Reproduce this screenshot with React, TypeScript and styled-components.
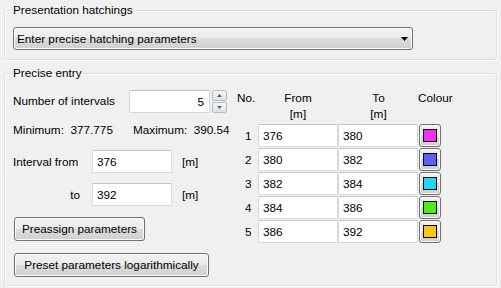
import styled, { createGlobalStyle } from 'styled-components';

const rows = [
  { no: 1, from: '376', to: '380', colour: '#f133f1' },
  { no: 2, from: '380', to: '382', colour: '#5f5ff7' },
  { no: 3, from: '382', to: '384', colour: '#22d9f7' },
  { no: 4, from: '384', to: '386', colour: '#4cf014' },
  { no: 5, from: '386', to: '392', colour: '#f5c816' },
];

const GlobalStyle = createGlobalStyle`
  html, body {
    margin: 0;
    padding: 0;
    background: #f0f0f0;
  }
  body {
    font-family: "Liberation Sans", Arial, sans-serif;
    font-size: 11.75px;
    color: #000;
  }
`;

const App = (): JSX.Element => (
  <>
    <GlobalStyle />
    <Window>
      <GroupBox $pad="10px 8px 9px">
        <Legend>Presentation hatchings</Legend>
        <Dropdown>
          <span>Enter precise hatching parameters</span>
          <svg width="7" height="4" viewBox="0 0 7 4">
            <path d="M0 0h7L3.5 4z" fill="#000" />
          </svg>
        </Dropdown>
      </GroupBox>

      <GroupBox $pad="9px 8px 0" $grow>
        <Legend>Precise entry</Legend>
        <Columns>
          <LeftColumn>
            <Row $height={24}>
              <Label $width={116}>Number of intervals</Label>
              <TextBox $width={81} $align="right" defaultValue="5" />
              <Spinner>
                <SpinButton>
                  <svg width="5" height="3" viewBox="0 0 5 3"><path d="M0 3h5L2.5 0z" fill="#4d6283" /></svg>
                </SpinButton>
                <SpinButton>
                  <svg width="5" height="3" viewBox="0 0 5 3"><path d="M0 0h5L2.5 3z" fill="#4d6283" /></svg>
                </SpinButton>
              </Spinner>
            </Row>

            <Row $height={14} $top={10}>
              <Label $width={120}>Minimum:&nbsp; 377.775</Label>
              <Label>Maximum:&nbsp; 390.54</Label>
            </Row>

            <Row $height={23} $top={13}>
              <Label $width={79}>Interval from</Label>
              <TextBox $width={80} defaultValue="376" />
              <Unit>[m]</Unit>
            </Row>

            <Row $height={23} $top={10}>
              <Label $width={79} $right>to</Label>
              <TextBox $width={80} defaultValue="392" />
              <Unit>[m]</Unit>
            </Row>

            <Row $height={24} $top={11}>
              <PushButton $width={131}>Preassign parameters</PushButton>
            </Row>

            <Row $height={24} $top={12}>
              <PushButton $width={195}>Preset parameters logarithmically</PushButton>
            </Row>
          </LeftColumn>

          <Table>
            <HeaderRow>
              <HeadCell>No.</HeadCell>
              <HeadCell $center>From<br />[m]</HeadCell>
              <HeadCell $center>To<br />[m]</HeadCell>
              <HeadCell $shift>Colour</HeadCell>
            </HeaderRow>
            <Body>
              {rows.map(r => (
                <TableRow key={r.no}>
                  <NoCell>{r.no}</NoCell>
                  <TextBox $width={80} defaultValue={r.from} />
                  <TextBox $width={80} defaultValue={r.to} />
                  <ColourButton>
                    <Swatch style={{ background: r.colour }} />
                  </ColourButton>
                </TableRow>
              ))}
            </Body>
          </Table>
        </Columns>
      </GroupBox>
    </Window>
  </>
);

export default App;

const Window = styled.div`
  width: 501px;
  height: 288px;
  box-sizing: border-box;
  padding: 3px 4px 2px;
  display: flex;
  flex-direction: column;
  gap: 6px;
  overflow: hidden;
`
const GroupBox = styled.fieldset<{ $pad: string; $grow?: boolean }>`
  margin: 0;
  min-width: 0;
  padding: ${p => p.$pad};
  border: 1px solid #d5dfe5;
  border-radius: 3px;
  box-shadow: inset 1px 1px 0 #fff, 1px 1px 0 #fff;
  flex: ${p => (p.$grow ? 1 : 'none')};
`
const Legend = styled.legend`
  margin-left: -2px;
  padding: 0 2px;
  line-height: 14px;
`
const buttonFace = `
  border: 1px solid #707070;
  border-radius: 3px;
  background: linear-gradient(#f2f2f2 0%, #ebebeb 50%, #dddddd 50%, #cfcfcf 100%);
  box-shadow: inset 0 0 0 1px #fbfbfb;
`
const Dropdown = styled.div`
  ${buttonFace}
  box-sizing: border-box;
  width: 400px;
  height: 23px;
  padding: 0 4px 0 3px;
  display: flex;
  align-items: center;
  justify-content: space-between;
`
const Columns = styled.div`
  display: grid;
  grid-template-columns: 224px auto;
`
const LeftColumn = styled.div`
  display: flex;
  flex-direction: column;
`
const Row = styled.div<{ $height: number; $top?: number }>`
  display: flex;
  align-items: center;
  height: ${p => p.$height}px;
  margin-top: ${p => p.$top ?? 0}px;
  line-height: 14px;
`
const Label = styled.span<{ $width?: number; $right?: boolean }>`
  flex: none;
  box-sizing: border-box;
  width: ${p => (p.$width ? `${p.$width}px` : 'auto')};
  text-align: ${p => (p.$right ? 'right' : 'left')};
  padding-right: ${p => (p.$right ? 12 : 0)}px;
  white-space: nowrap;
`
const TextBox = styled.input<{ $width: number; $align?: string }>`
  box-sizing: border-box;
  width: ${p => p.$width}px;
  height: 23px;
  margin: 0;
  padding: 0 5px 0 4px;
  border: 1px solid #d6d8dc;
  border-top-color: #c2c4c9;
  border-radius: 2px;
  background: #fff;
  font: inherit;
  color: #000;
  text-align: ${p => p.$align ?? 'left'};
  outline: none;
`
const Unit = styled.span`
  margin-left: 10px;
`
const Spinner = styled.div`
  margin-left: 2px;
  display: flex;
  flex-direction: column;
  gap: 1px;
`
const SpinButton = styled.div`
  box-sizing: border-box;
  width: 15px;
  height: 11px;
  border: 1px solid #b4bac2;
  border-radius: 2px;
  background: linear-gradient(#f7f7f7, #dfe1e4);
  display: flex;
  align-items: center;
  justify-content: center;
`
const PushButton = styled.div<{ $width: number }>`
  ${buttonFace}
  box-sizing: border-box;
  margin-left: 1px;
  width: ${p => p.$width}px;
  height: 24px;
  display: flex;
  align-items: center;
  justify-content: center;
  white-space: nowrap;
`
const Table = styled.div`
  display: flex;
  flex-direction: column;
`
const tableColumns = `
  display: grid;
  grid-template-columns: 21px 80px 81px 22px;
  align-items: center;
`
const HeaderRow = styled.div`
  ${tableColumns}
  margin-top: 1px;
  height: 32px;
  align-items: start;
  line-height: 16px;
`
const HeadCell = styled.div<{ $center?: boolean; $shift?: boolean }>`
  text-align: ${p => (p.$center ? 'center' : 'left')};
  margin-left: ${p => (p.$shift ? -1 : 0)}px;
  white-space: nowrap;
`
const Body = styled.div`
  margin-top: 2px;
  display: flex;
  flex-direction: column;
  gap: 1px;
`
const TableRow = styled.div`
  ${tableColumns}
  height: 23px;
`
const NoCell = styled.div`
  padding-left: 8px;
`
const ColourButton = styled.div`
  ${buttonFace}
  box-sizing: border-box;
  width: 22px;
  height: 23px;
  display: flex;
  align-items: center;
  justify-content: center;
`
const Swatch = styled.div`
  box-sizing: border-box;
  width: 14px;
  height: 13px;
  border: 1px solid #000;
`
